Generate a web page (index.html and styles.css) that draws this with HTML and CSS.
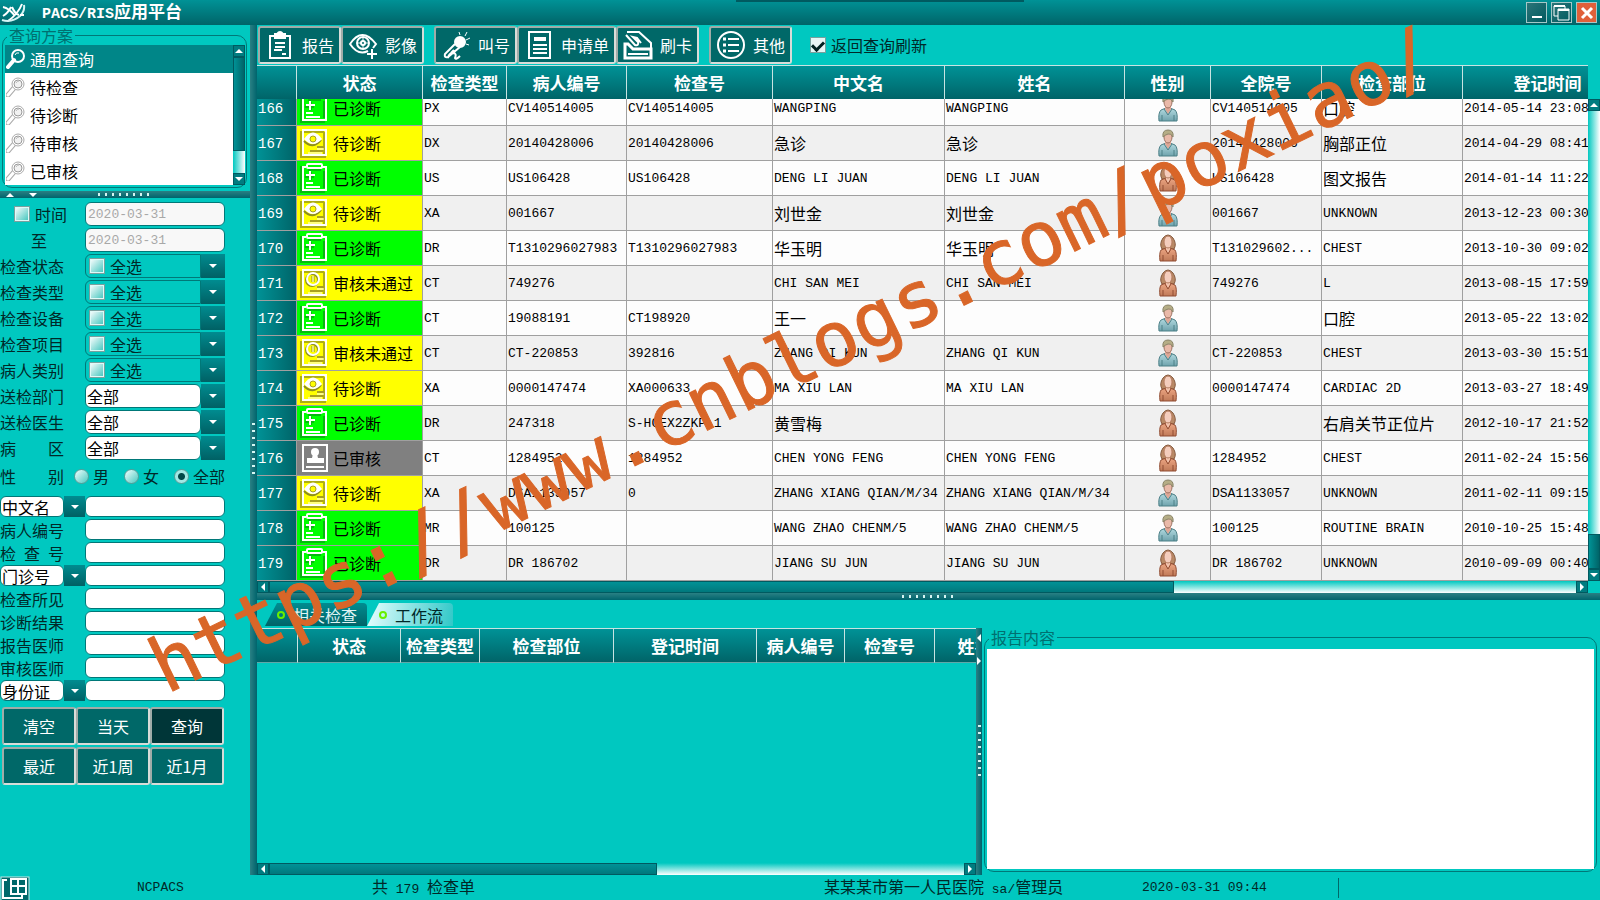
FILE: index.html
```html
<!DOCTYPE html>
<html lang="zh-CN">
<head>
  <meta charset="UTF-8">
  <meta name="viewport" content="width=device-width, initial-scale=1.0">
  <title>PACS/RIS应用平台</title>
  <link rel="stylesheet" href="styles.css">
</head>
<body>
  <!-- Shared icons -->
  <svg class="sprite" aria-hidden="true">
    <defs>
      <linearGradient id="shirt-m" x1="0" y1="0" x2="0" y2="1"><stop offset="0" stop-color="#b5dce2"/><stop offset="1" stop-color="#6fa3ad"/></linearGradient>
      <linearGradient id="shirt-f" x1="0" y1="0" x2="0" y2="1"><stop offset="0" stop-color="#eda683"/><stop offset="1" stop-color="#c07a58"/></linearGradient>
    </defs>
    <symbol id="done" viewBox="0 0 28 30">
      <path d="M6 4H1v25h24M24 8v17M8 7h13M11 9v8M5 14h9" fill="none" stroke="#0a8a1a" stroke-width="2" opacity=".6"/>
      <g fill="none" stroke="#fff" stroke-width="2"><path d="M6 4H3v23h23V4h-4"/><rect x="7" y="1" width="15" height="4" rx="1"/><path d="M6 12h9M10 8v9M6 20h7M6 24h14"/></g>
    </symbol>
    <symbol id="wait" viewBox="0 0 28 30">
      <path d="M1 3v26h25M4 4h20M24 4v22" fill="none" stroke="#8c8c20" stroke-width="2" opacity=".7"/>
      <rect x="3" y="2" width="23" height="25" fill="none" stroke="#fff" stroke-width="2"/>
      <path d="M4 13q9 9 17-1" fill="none" stroke="#8c8c20" stroke-width="2"/>
      <path d="M4 11q9-13 18 0q-9 10-18 0z" fill="#fff"/>
      <circle cx="13" cy="11" r="3" fill="#ffff00" stroke="#a8a020"/>
      <path d="M17 19h7M10 23h13" stroke="#a8a020" stroke-width="2"/><path d="M17 21h7M8 25h14" stroke="#fff"/>
    </symbol>
    <symbol id="reject" viewBox="0 0 28 30">
      <path d="M1 3v26h25M4 4h20M24 4v22" fill="none" stroke="#8c8c20" stroke-width="2" opacity=".7"/>
      <rect x="3" y="2" width="23" height="25" fill="none" stroke="#fff" stroke-width="2"/>
      <circle cx="12" cy="12" r="6" fill="none" stroke="#8c8c20" stroke-width="2"/>
      <circle cx="13" cy="11" r="6" fill="none" stroke="#fff" stroke-width="2"/>
      <path d="M12 8v6M14 8v6" stroke="#8c8c20"/><path d="M13 8v6" stroke="#fff"/>
      <path d="M17 19h7M10 23h13" stroke="#a8a020" stroke-width="2"/><path d="M17 21h7M8 25h14" stroke="#fff"/>
    </symbol>
    <symbol id="audit" viewBox="0 0 28 30">
      <rect x="3" y="2" width="24" height="26" fill="none" stroke="#fff" stroke-width="2"/>
      <circle cx="15" cy="9" r="4" fill="#fff"/><path d="M13 11h4l1 4h6v5H7v-5h5zM6 23h18v2H6z" fill="#fff"/>
    </symbol>
    <symbol id="male" viewBox="0 0 20 28">
      <path d="M1 27q-1-8 2-11l5-2h4l5 2q3 3 2 11z" fill="url(#shirt-m)" stroke="#4d8087"/>
      <path d="M7 12h6v3l-3 5-3-5z" fill="#dfa796"/><path d="M6 15l4 6 4-6M4 21v6M16 21v6" fill="none" stroke="#4d8087"/>
      <ellipse cx="10" cy="8" rx="4" ry="6" fill="#e9b9a8" stroke="#9c7162"/>
      <path d="M5 8q-1-7 5-7t5 7q-2-4-5-3t-5 3z" fill="#b5ad86" stroke="#8a8468"/>
    </symbol>
    <symbol id="female" viewBox="0 0 20 28">
      <path d="M4 15Q1 10 5 4q5-6 10 0 4 6 1 11z" fill="#b98a66" stroke="#84583c"/>
      <path d="M2 27q-1-8 1-11l5-2h4l5 2q2 3 1 11z" fill="url(#shirt-f)" stroke="#914d33"/>
      <path d="M8 12h4v3l-2 4-2-4z" fill="#f1c3ae"/><path d="M7 15l3 5 3-5M5 21v6M15 21v6" fill="none" stroke="#914d33"/>
      <ellipse cx="10" cy="8" rx="4" ry="6" fill="#f4cdbd" stroke="#b57c60"/>
    </symbol>
    <symbol id="search" viewBox="0 0 20 20">
      <path d="M8 11l-6 7" stroke="currentColor" stroke-width="4" stroke-linecap="round"/>
      <circle cx="12" cy="7" r="6" fill="none" stroke="currentColor" stroke-width="2"/>
      <path d="M9 6q1-3 4-2" fill="none" stroke="currentColor"/>
    </symbol>
    <symbol id="search-grey" viewBox="0 0 20 20">
      <path d="M8 11l-6 7" stroke="#aaa" stroke-width="5" stroke-linecap="round"/><path d="M8 11l-6 7" stroke="#fff" stroke-width="3" stroke-linecap="round"/>
      <circle cx="12" cy="7" r="6" fill="#fff" stroke="#aaa"/><circle cx="12" cy="7" r="4" fill="#f2f2f2" stroke="#999"/>
      <path d="M10 6q1-2 3-2" fill="none" stroke="#bbb"/>
    </symbol>
  </svg>

  <header class="titlebar">
    <svg class="logo" width="26" height="22" viewBox="0 0 26 22" fill="none" stroke="#fff"><path d="M3 5q6 1 12 9M11 5q-3 6-8 9M12 5q3 7 7 8M22 2q-4 10-14 17" stroke-width="2"/><path d="M2 18q10 3 18-4 5-5 4-11" stroke="#d5f5f5" stroke-width="2"/><path d="M20 13h4" stroke-width="2"/></svg>
    <h1><span class="latin">PACS/RIS</span>应用平台</h1>
    <div class="win-btns">
      <button aria-label="最小化"><svg width="20" height="20"><path d="M5 14h10" stroke="#fff" stroke-width="2"/></svg></button>
      <button aria-label="还原"><svg width="20" height="20" fill="none" stroke="#fff"><path d="M6 13H2V3h11v3M6 6h11v11H6z" stroke-width="1"/><path d="M2 3h11M6 7h11" stroke-width="2"/></svg></button>
      <button class="close" aria-label="关闭"><svg width="20" height="20"><path d="M5 5l10 10M15 5L5 15" stroke="#fff" stroke-width="3"/></svg></button>
    </div>
  </header>

  <div class="work">
    <aside class="sidebar">
      <fieldset class="group schemes">
        <legend>查询方案</legend>
        <div class="scheme-box">
          <ul>
            <li class="active"><svg><use href="#search"/></svg>通用查询</li>
            <li><svg><use href="#search-grey"/></svg>待检查</li>
            <li><svg><use href="#search-grey"/></svg>待诊断</li>
            <li><svg><use href="#search-grey"/></svg>待审核</li>
            <li><svg><use href="#search-grey"/></svg>已审核</li>
          </ul>
          <div class="vscroll"><i class="sb up"></i><i class="thumb"></i><i class="track"></i><i class="sb down"></i></div>
        </div>
      </fieldset>
      <div class="split-h side-split"><i class="tri up"></i><i class="tri down"></i><i class="dots"></i></div>

      <form class="query">
        <div class="row"><label class="time"><input type="checkbox">时间</label><input type="text" value="2020-03-31" aria-label="开始日期" disabled></div>
        <div class="row"><label class="to" for="date-end">至</label><input type="text" id="date-end" value="2020-03-31" disabled></div>
        <div class="row"><span class="name">检查状态</span><div class="combo"><label><input type="checkbox">全选</label><button type="button" class="arrow" aria-label="检查状态"></button></div></div>
        <div class="row"><span class="name">检查类型</span><div class="combo"><label><input type="checkbox">全选</label><button type="button" class="arrow" aria-label="检查类型"></button></div></div>
        <div class="row"><span class="name">检查设备</span><div class="combo"><label><input type="checkbox">全选</label><button type="button" class="arrow" aria-label="检查设备"></button></div></div>
        <div class="row"><span class="name">检查项目</span><div class="combo"><label><input type="checkbox">全选</label><button type="button" class="arrow" aria-label="检查项目"></button></div></div>
        <div class="row"><span class="name">病人类别</span><div class="combo"><label><input type="checkbox">全选</label><button type="button" class="arrow" aria-label="病人类别"></button></div></div>
        <div class="row"><label class="name" for="dept">送检部门</label><div class="combo"><select id="dept"><option>全部</option></select><i class="arrow"></i></div></div>
        <div class="row"><label class="name" for="doctor">送检医生</label><div class="combo"><select id="doctor"><option>全部</option></select><i class="arrow"></i></div></div>
        <div class="row"><label class="name" for="ward">病 区</label><div class="combo"><select id="ward"><option>全部</option></select><i class="arrow"></i></div></div>
        <div class="sex">
          <span class="name">性 别</span>
          <label><input type="radio" name="sex">男</label>
          <label><input type="radio" name="sex">女</label>
          <label><input type="radio" name="sex" checked>全部</label>
        </div>
        <div class="row small"><div class="combo"><select aria-label="姓名字段"><option>中文名</option></select><i class="arrow"></i></div><input type="text" aria-label="中文名"></div>
        <div class="row small"><label class="name" for="pid">病人编号</label><input type="text" id="pid"></div>
        <div class="row small"><label class="name" for="eid">检 查 号</label><input type="text" id="eid"></div>
        <div class="row small"><div class="combo"><select aria-label="号码字段"><option>门诊号</option></select><i class="arrow"></i></div><input type="text" aria-label="门诊号"></div>
        <div class="row small"><label class="name" for="finding">检查所见</label><input type="text" id="finding"></div>
        <div class="row small"><label class="name" for="result">诊断结果</label><input type="text" id="result"></div>
        <div class="row small"><label class="name" for="reporter">报告医师</label><input type="text" id="reporter"></div>
        <div class="row small"><label class="name" for="auditor">审核医师</label><input type="text" id="auditor"></div>
        <div class="row small"><div class="combo"><select aria-label="证件字段"><option>身份证</option></select><i class="arrow"></i></div><input type="text" aria-label="身份证"></div>
        <div class="actions">
          <button type="reset" class="btn">清空</button>
          <button type="button" class="btn">当天</button>
          <button type="submit" class="btn dark">查询</button>
          <button type="button" class="btn">最近</button>
          <button type="button" class="btn">近1周</button>
          <button type="button" class="btn">近1月</button>
        </div>
      </form>
    </aside>

    <div class="split-v"><i class="dots"></i></div>

    <main class="main">
      <div class="toolbar">
        <button class="btn"><svg viewBox="0 0 30 30" fill="none" stroke="#fff" stroke-width="2"><path d="M9 6H5v22h20V6h-4"/><path d="M10 4h2q3-4 6 0h2v4H10z" fill="#fff"/><path d="M10 13h10M10 17h10M9 20h8M17 24h4"/></svg>报告</button>
        <button class="btn"><svg viewBox="0 0 30 30" fill="none" stroke="#fff" stroke-width="2"><path d="M20 21q-10 5-18-7Q14-4 28 14l-3 4"/><circle cx="15" cy="13" r="6"/><circle cx="15" cy="13" r="2"/><path d="M15 7v4M15 15v4M9 13h4M17 13h4" stroke-width="1"/><path d="M24 19v10M19 24h10"/></svg>影像</button>
        <button class="btn gap"><svg viewBox="0 0 30 30" fill="none" stroke="#fff" stroke-width="2"><circle cx="19" cy="12" r="5" fill="#fff"/><path d="M14 14L4 24q-1 4 3 3l12-10M10 23l3-3M7 28q1-5 5-5t2 5q1 2 5-2"/><path d="M19 5l-1-3M24 6l2-4M25 10l4-2M25 14l3 1" stroke-width="1"/></svg>叫号</button>
        <button class="btn"><svg viewBox="0 0 30 30" fill="none" stroke="#fff" stroke-width="2"><rect x="5" y="2" width="21" height="26"/><path d="M10 9h12" stroke-width="4"/><path d="M9 15h14M9 19h14M9 23h14"/></svg>申请单</button>
        <button class="btn"><svg viewBox="0 0 30 30" fill="none" stroke="#fff" stroke-width="2"><path d="M2 14h3l5 5h18v9H2z" stroke-width="3"/><path d="M4 2h12l12 11v6M3 5l9 10q4 1 3-3l-5-5 4 1 4 5M5 24h20"/></svg>刷卡</button>
        <button class="btn gap"><svg viewBox="0 0 30 30" fill="none" stroke="#fff" stroke-width="2"><circle cx="15" cy="15" r="13"/><path d="M12 9h11M12 15h11M12 21h11"/><path d="M7 9h3M7 15h3M7 21h3" stroke-width="3"/></svg>其他</button>
        <label class="refresh"><input type="checkbox" checked>返回查询刷新</label>
      </div>

      <section class="exams">
        <div class="exam-clip">
          <table class="exam-table head">
            <colgroup><col class="w-no"><col class="w-state"><col class="w-type"><col class="w-pid"><col class="w-eid"><col class="w-cname"><col class="w-name"><col class="w-sex"><col class="w-hid"><col class="w-part"><col class="w-date"></colgroup>
            <thead>
              <tr><th></th><th>状态</th><th>检查类型</th><th>病人编号</th><th>检查号</th><th>中文名</th><th>姓名</th><th>性别</th><th>全院号</th><th>检查部位</th><th>登记时间</th></tr>
            </thead>
          </table>
        </div>
        <div class="exam-view">
          <div class="exam-clip">
            <table class="exam-table rows">
              <colgroup><col class="w-no"><col class="w-state"><col class="w-type"><col class="w-pid"><col class="w-eid"><col class="w-cname"><col class="w-name"><col class="w-sex"><col class="w-hid"><col class="w-part"><col class="w-date"></colgroup>
              <tbody>
                <tr><th>166</th><td class="state done"><svg><use href="#done"/></svg>已诊断</td><td>PX</td><td>CV140514005</td><td>CV140514005</td><td>WANGPING</td><td>WANGPING</td><td class="person"><svg><use href="#male"/></svg></td><td>CV140514005</td><td class="cn">口腔</td><td>2014-05-14 23:08</td></tr>
                <tr><th>167</th><td class="state wait"><svg><use href="#wait"/></svg>待诊断</td><td>DX</td><td>20140428006</td><td>20140428006</td><td class="cn">急诊</td><td class="cn">急诊</td><td class="person"><svg><use href="#male"/></svg></td><td>20140428006</td><td class="cn">胸部正位</td><td>2014-04-29 08:41</td></tr>
                <tr><th>168</th><td class="state done"><svg><use href="#done"/></svg>已诊断</td><td>US</td><td>US106428</td><td>US106428</td><td>DENG LI JUAN</td><td>DENG LI JUAN</td><td class="person"><svg><use href="#female"/></svg></td><td>US106428</td><td class="cn">图文报告</td><td>2014-01-14 11:22</td></tr>
                <tr><th>169</th><td class="state wait"><svg><use href="#wait"/></svg>待诊断</td><td>XA</td><td>001667</td><td></td><td class="cn">刘世金</td><td class="cn">刘世金</td><td class="person"><svg><use href="#male"/></svg></td><td>001667</td><td>UNKNOWN</td><td>2013-12-23 00:30</td></tr>
                <tr><th>170</th><td class="state done"><svg><use href="#done"/></svg>已诊断</td><td>DR</td><td>T1310296027983</td><td>T1310296027983</td><td class="cn">华玉明</td><td class="cn">华玉明</td><td class="person"><svg><use href="#female"/></svg></td><td>T131029602...</td><td>CHEST</td><td>2013-10-30 09:02</td></tr>
                <tr><th>171</th><td class="state wait"><svg><use href="#reject"/></svg>审核未通过</td><td>CT</td><td>749276</td><td></td><td>CHI SAN MEI</td><td>CHI SAN MEI</td><td class="person"><svg><use href="#female"/></svg></td><td>749276</td><td>L</td><td>2013-08-15 17:59</td></tr>
                <tr><th>172</th><td class="state done"><svg><use href="#done"/></svg>已诊断</td><td>CT</td><td>19088191</td><td>CT198920</td><td class="cn">王一</td><td></td><td class="person"><svg><use href="#male"/></svg></td><td></td><td class="cn">口腔</td><td>2013-05-22 13:02</td></tr>
                <tr><th>173</th><td class="state wait"><svg><use href="#reject"/></svg>审核未通过</td><td>CT</td><td>CT-220853</td><td>392816</td><td>ZHANG QI KUN</td><td>ZHANG QI KUN</td><td class="person"><svg><use href="#male"/></svg></td><td>CT-220853</td><td>CHEST</td><td>2013-03-30 15:51</td></tr>
                <tr><th>174</th><td class="state wait"><svg><use href="#wait"/></svg>待诊断</td><td>XA</td><td>0000147474</td><td>XA000633</td><td>MA XIU LAN</td><td>MA XIU LAN</td><td class="person"><svg><use href="#female"/></svg></td><td>0000147474</td><td>CARDIAC 2D</td><td>2013-03-27 18:49</td></tr>
                <tr><th>175</th><td class="state done"><svg><use href="#done"/></svg>已诊断</td><td>DR</td><td>247318</td><td>S-HCEX2ZKP 1</td><td class="cn">黄雪梅</td><td></td><td class="person"><svg><use href="#female"/></svg></td><td></td><td class="cn">右肩关节正位片</td><td>2012-10-17 21:52</td></tr>
                <tr><th>176</th><td class="state audit"><svg><use href="#audit"/></svg>已审核</td><td>CT</td><td>1284952</td><td>1284952</td><td>CHEN YONG FENG</td><td>CHEN YONG FENG</td><td class="person"><svg><use href="#female"/></svg></td><td>1284952</td><td>CHEST</td><td>2011-02-24 15:56</td></tr>
                <tr><th>177</th><td class="state wait"><svg><use href="#wait"/></svg>待诊断</td><td>XA</td><td>DSA1133057</td><td>0</td><td>ZHANG XIANG QIAN/M/34</td><td>ZHANG XIANG QIAN/M/34</td><td class="person"><svg><use href="#male"/></svg></td><td>DSA1133057</td><td>UNKNOWN</td><td>2011-02-11 09:15</td></tr>
                <tr><th>178</th><td class="state done"><svg><use href="#done"/></svg>已诊断</td><td>MR</td><td>100125</td><td></td><td>WANG ZHAO CHENM/5</td><td>WANG ZHAO CHENM/5</td><td class="person"><svg><use href="#male"/></svg></td><td>100125</td><td>ROUTINE BRAIN</td><td>2010-10-25 15:48</td></tr>
                <tr><th>179</th><td class="state done"><svg><use href="#done"/></svg>已诊断</td><td>DR</td><td>DR 186702</td><td></td><td>JIANG SU JUN</td><td>JIANG SU JUN</td><td class="person"><svg><use href="#female"/></svg></td><td>DR 186702</td><td>UNKNOWN</td><td>2010-09-09 00:40</td></tr>
              </tbody>
            </table>
          </div>
          <div class="vscroll"><i class="sb up"></i><i class="track"></i><i class="thumb"></i><i class="sb down"></i></div>
        </div>
        <div class="hscroll"><i class="sb left"></i><i class="thumb"></i><i class="track"></i><i class="sb right"></i></div>
      </section>

      <div class="split-h"><i class="dots"></i></div>

      <section class="lower">
        <div class="related">
          <div class="tabs">
            <button class="tab">相关检查</button>
            <button class="tab active">工作流</button>
          </div>
          <div class="related-clip">
            <table class="related-table">
              <colgroup><col class="r-no"><col class="r-state"><col class="r-type"><col class="r-part"><col class="r-date"><col class="r-pid"><col class="r-eid"><col class="r-name"></colgroup>
              <thead>
                <tr><th></th><th>状态</th><th>检查类型</th><th>检查部位</th><th>登记时间</th><th>病人编号</th><th>检查号</th><th>姓名</th></tr>
              </thead>
            </table>
          </div>
          <div class="hscroll"><i class="sb left"></i><i class="thumb"></i><i class="track"></i><i class="sb right"></i></div>
        </div>
        <div class="split-v lower-split"><i class="tri left"></i><i class="tri right"></i><i class="dots"></i></div>
        <fieldset class="group report">
          <legend>报告内容</legend>
          <textarea aria-label="报告内容"></textarea>
        </fieldset>
      </section>
    </main>
  </div>

  <footer class="statusbar">
    <svg width="30" height="24" viewBox="0 0 30 24" fill="none" stroke="#fff" stroke-width="2"><rect x="1" y="1" width="28" height="24" fill="#00686a" stroke="#c5e8e6" stroke-width="1"/><path d="M7 4H3v18h19v-3"/><rect x="11" y="3" width="15" height="15"/><path d="M18 3v15M11 10h15"/></svg>
    <span class="product latin">NCPACS</span>
    <span class="count">共<span class="latin"> 179 </span>检查单</span>
    <span class="user">某某某市第一人民医院<span class="latin"> sa/</span>管理员</span>
    <span class="clock latin">2020-03-31 09:44</span>
  </footer>

  <div class="watermark">https://www.cnblogs.com/poxiao/</div>
</body>
</html>
```
FILE: styles.css
```css
:root {
  --bg: #00c8c0;
  --bar-light: #009296;
  --bar-dark: #006468;
  --btn: #006868;
  --line: #007878;
  --grid: #a0a0a0;
  --cn: "Noto Sans CJK SC", sans-serif;
  --latin: "Liberation Mono", "Noto Sans CJK SC", monospace;
}

*,
*::before {
  box-sizing: border-box;
}

body {
  margin: 0;
  height: 100vh;
  display: flex;
  flex-direction: column;
  position: relative;
  overflow: hidden;
  background: var(--bg);
  color: #002828;
  font-family: var(--cn);
  font-size: 16px;
  line-height: 20px;
}

button,
input,
select,
textarea {
  font: inherit;
  margin: 0;
  padding: 0;
}
.latin {
  font-family: var(--latin);
  font-size: 13px;
}
.sprite {
  position: absolute;
  width: 0;
  height: 0;
}

/* Title bar */
.titlebar {
  flex: none;
  height: 25px;
  display: flex;
  align-items: center;
  background: linear-gradient(var(--bar-light), var(--bar-dark));
  color: #fff;
}
.titlebar h1 {
  flex: 1;
  margin: 0 0 0 16px;
  font-size: 17px;
}
.titlebar .latin {
  font-size: 15px;
}
.titlebar::after {
  content: "";
  position: absolute;
  left: 46%;
  top: 0;
  width: 18%;
  height: 2px;
  background: #005a60;
}
.win-btns {
  display: flex;
  gap: 4px;
  padding-right: 3px;
}
.win-btns button {
  width: 21px;
  height: 21px;
  border: 1px solid #a5c8c8;
  background: linear-gradient(135deg, #2c7578, #005a60);
}
.win-btns svg {
  display: block;
}
.win-btns .close {
  background: #e0603a;
}

.work {
  flex: 1;
  min-height: 0;
  display: flex;
}

/* Groups */
.group {
  min-width: 0;
  margin: 0 3px 3px 2px;
  padding: 0 1px 2px 2px;
  border: 1px solid var(--line);
  border-radius: 10px;
}
.group legend {
  margin-left: 2px;
  padding: 0 2px;
  color: #007070;
}

/* Sidebar */
.sidebar {
  flex: none;
  width: 250px;
}
.scheme-box {
  display: flex;
}
.scheme-box ul {
  flex: 1;
  margin: 0;
  padding: 0;
  list-style: none;
  background: #fff;
  color: #000;
}
.scheme-box li {
  display: flex;
  align-items: center;
  gap: 4px;
  height: 28px;
  padding-left: 1px;
}
.scheme-box li svg {
  width: 20px;
  height: 20px;
}
.scheme-box .active {
  background: #008688;
  color: #fff;
}

/* Scroll bars */
.vscroll,
.hscroll {
  display: flex;
  flex: none;
}
.vscroll {
  flex-direction: column;
  width: 12px;
}
.hscroll {
  height: 12px;
}
.hscroll .track {
  flex: 1;
  background: linear-gradient(var(--bg), #fff);
}
.vscroll .track {
  flex: 1;
  background: linear-gradient(90deg, var(--bg), #fff);
}
.thumb {
  border: 1px solid #005a60;
  background: linear-gradient(#009296, #00787c);
}
.vscroll .thumb {
  height: 35px;
  background: linear-gradient(90deg, #009296, #006468);
}
.scheme-box .vscroll .thumb {
  flex: none;
  height: 94px;
}
.sb {
  flex: none;
  width: 12px;
  height: 12px;
  display: flex;
  align-items: center;
  justify-content: center;
  border: 1px solid #005a60;
  background: #007c80;
}
.sb::before {
  content: "";
  border: 4px solid transparent;
}
.sb.up::before,
.tri.up {
  border-top-width: 0;
  border-bottom-color: #fff;
}
.sb.down::before,
.tri.down {
  border-bottom-width: 0;
  border-top-color: #fff;
}
.sb.left::before,
.tri.left {
  border-left-width: 0;
  border-right-color: #fff;
}
.sb.right::before,
.tri.right {
  border-right-width: 0;
  border-left-color: #fff;
}

/* Splitters */
.split-h {
  flex: none;
  height: 7px;
  display: flex;
  align-items: center;
  justify-content: center;
  background: linear-gradient(#2a8084, #00646c);
}
.split-v {
  flex: none;
  width: 7px;
  display: flex;
  flex-direction: column;
  align-items: center;
  justify-content: center;
  background: linear-gradient(90deg, #2a8084, #00646c);
}
.dots {
  width: 54px;
  height: 3px;
  background: repeating-linear-gradient(90deg, #d5f5f2 0 2px, transparent 2px 7px);
}
.split-v .dots {
  width: 3px;
  height: 54px;
  background: repeating-linear-gradient(#d5f5f2 0 2px, transparent 2px 7px);
}
.tri {
  border: 4px solid transparent;
}
.side-split {
  justify-content: flex-start;
  gap: 15px;
  padding-left: 6px;
}
.side-split .dots {
  margin-left: 46px;
}

/* Query form */
.query {
  width: 225px;
  padding-top: 4px;
}
.row {
  display: grid;
  grid-template-columns: 85px 140px;
  align-items: center;
  height: 24px;
  margin-bottom: 2px;
}
.name {
  width: 64px;
  text-align-last: justify;
  white-space: nowrap;
}
.time {
  display: flex;
  align-items: center;
  gap: 5px;
  padding-left: 14px;
}
.to {
  padding-left: 31px;
}
input[type="text"] {
  width: 100%;
  height: 100%;
  padding: 0 2px;
  border: 1px solid var(--line);
  border-radius: 6px;
  background: #fff;
  font-family: var(--latin);
  font-size: 13px;
}
input[type="text"]:disabled {
  background: #f8f8f8;
  color: #a8a8a8;
}
input[type="checkbox"] {
  appearance: none;
  flex: none;
  width: 16px;
  height: 16px;
  border: 1px solid #7aa09e;
  background: linear-gradient(135deg, #fff, #3cc4bc);
  box-shadow: inset 0 0 0 1px #e0faf8;
}
.combo {
  display: flex;
  height: 100%;
  min-width: 0;
}
.combo label,
.combo select {
  flex: 1;
  min-width: 0;
  display: flex;
  align-items: center;
  gap: 5px;
  border: 1px solid var(--line);
  border-radius: 6px;
}
.combo label {
  padding-left: 3px;
  border-radius: 6px 0 0 6px;
}
.combo select {
  appearance: none;
  padding: 0 1px;
  background: #fff;
  color: #000;
  line-height: 18px;
}
.arrow {
  flex: none;
  width: 24px;
  display: flex;
  align-items: center;
  justify-content: center;
  border: 0;
  background: linear-gradient(#008c90, #006064);
}
.arrow::before {
  content: "";
  border: 4px solid transparent;
  border-bottom-width: 0;
  border-top-color: #fff;
}
.small {
  height: 21px;
}
.small .arrow {
  width: 21px;
}
.sex {
  display: flex;
  align-items: center;
  height: 28px;
  margin: 0 -2px 6px 0;
}
.sex label {
  display: flex;
  align-items: center;
  gap: 4px;
  margin-right: 15px;
  white-space: nowrap;
}
.sex .name {
  margin-right: 10px;
}
.sex label:last-child {
  margin-right: 0;
}
.sex input {
  appearance: none;
  width: 15px;
  height: 15px;
  border: 1px solid #5a9c98;
  border-radius: 50%;
  background: linear-gradient(135deg, #f0fffe, #4cc8c0);
}
.sex input:checked {
  background: radial-gradient(#004848 0 3px, #a0e8e4 4px);
}
.btn {
  display: flex;
  align-items: center;
  justify-content: center;
  height: 38px;
  border: 2px solid #d8dcd8;
  border-top-color: #a0aca8;
  border-left-color: #a0aca8;
  border-radius: 3px;
  background: var(--btn);
  color: #fff;
  white-space: nowrap;
}
.btn.dark {
  background: #003638;
}
.actions {
  display: grid;
  grid-template-columns: repeat(3, 1fr);
  gap: 2px 0;
  padding: 4px 1px 0 2px;
}

/* Main area */
.main {
  flex: 1;
  min-width: 0;
  display: flex;
  flex-direction: column;
}
.toolbar {
  flex: none;
  display: flex;
  align-items: center;
  height: 40px;
  padding-left: 1px;
}
.toolbar .btn {
  gap: 7px;
  min-width: 83px;
  padding: 0 5px;
}
.toolbar .btn svg {
  width: 30px;
  height: 30px;
}
.toolbar .gap {
  margin-left: 10px;
}
.refresh {
  display: flex;
  align-items: center;
  gap: 5px;
  margin-left: 18px;
}
.refresh input[type="checkbox"] {
  display: flex;
  align-items: center;
  justify-content: center;
  background: #e8f4f4;
}
.refresh input:checked::before {
  content: "";
  width: 12px;
  height: 8px;
  border: solid #002020;
  border-width: 0 0 3px 3px;
  transform: rotate(-45deg);
}

/* Tables */
table {
  table-layout: fixed;
  border-spacing: 0;
}
thead th {
  height: 34px;
  padding: 0;
  border-top: 1px solid #c8e4e2;
  border-right: 1px solid #c8e4e2;
  background: linear-gradient(var(--bar-light), var(--bar-dark));
  color: #fff;
  font-size: 17px;
  white-space: nowrap;
}
.exams {
  flex: none;
}
.exams > .exam-clip,
.exams > .hscroll {
  margin-right: 12px;
}
.exam-clip {
  flex: 1;
  min-width: 0;
  overflow: hidden;
}
.exam-view {
  display: flex;
}
.exam-table {
  width: 1376px;
}
.w-no { width: 40px; }
.w-state { width: 126px; }
.w-type { width: 84px; }
.w-pid { width: 120px; }
.w-eid { width: 146px; }
.w-cname { width: 172px; }
.w-name { width: 180px; }
.w-sex { width: 86px; }
.w-hid { width: 111px; }
.w-part { width: 141px; }
.w-date { width: 170px; }

/* the list is scrolled part way into its first row */
.rows {
  margin-top: -8px;
  color: #000;
}
.rows th,
.rows td {
  height: 35px;
  padding: 2px 0 0 1px;
  border-right: 1px solid var(--grid);
  border-bottom: 1px solid var(--grid);
  font-family: var(--latin);
  font-size: 13px;
  text-align: left;
  white-space: nowrap;
}
.rows th {
  background: linear-gradient(90deg, var(--bar-light), var(--bar-dark));
  color: #fff;
  font-size: 14px;
  font-weight: normal;
}
.rows tr {
  background: #fdfdfd;
}
.rows tr:nth-child(even) {
  background: #f0f0f0;
}
.rows .cn,
.rows .state {
  padding-top: 0;
  font-family: var(--cn);
  font-size: 16px;
}
.rows .state {
  line-height: 30px;
}
.rows svg {
  width: 28px;
  height: 30px;
  vertical-align: top;
}
.state svg {
  margin: 0 5px 0 2px;
}
.rows .done { background: #00ff00; }
.rows .wait { background: #ffff00; }
.rows .audit { background: #808080; }
.rows .person {
  padding: 0;
  text-align: center;
}
.person svg {
  height: 28px;
}
.exams .hscroll .thumb {
  width: 68%;
}

/* Lower area */
.lower {
  flex: 1;
  min-height: 0;
  display: grid;
  grid-template-columns: minmax(0, 719fr) 6px minmax(0, 618fr);
}
.related {
  display: flex;
  flex-direction: column;
}
.tabs {
  display: flex;
  align-items: flex-end;
  height: 28px;
  padding: 0 0 2px 8px;
}
.tab {
  display: flex;
  align-items: center;
  gap: 8px;
  height: 23px;
  padding: 0 10px 0 12px;
  border: 0;
  border-radius: 0 4px 0 0;
  background: linear-gradient(#008c90, #006468);
  clip-path: polygon(12px 0, 100% 0, 100% 100%, 0 100%);
  color: #e0f4f4;
}
.tab::before {
  content: "";
  width: 8px;
  height: 8px;
  border: 2px solid #68f000;
  border-radius: 50%;
}
.tab.active {
  background: linear-gradient(100deg, #e8ffff, #30c8c8);
  color: #002828;
}
.related-clip {
  flex: 1;
  overflow: hidden;
}
.related-table {
  width: 758px;
}
.related-table th {
  height: 35px;
  border-bottom: 1px solid #60a8a8;
}
.r-no { width: 41px; }
.r-state { width: 103px; }
.r-type { width: 79px; }
.r-part { width: 134px; }
.r-date { width: 143px; }
.r-pid { width: 88px; }
.r-eid { width: 90px; }
.r-name { width: 80px; }
.related .hscroll .thumb {
  width: 54%;
}
.lower-split {
  width: 6px;
  margin-top: 28px;
  justify-content: flex-start;
}
.lower-split .tri.right {
  margin-top: 15px;
}
.lower-split .tri.left {
  margin-top: 6px;
}
.lower-split .dots {
  margin-top: 60px;
}
.report {
  margin-top: 27px;
  padding: 2px;
  display: flex;
}
.report textarea {
  display: block;
  width: 100%;
  height: 100%;
  border: 0;
  resize: none;
  background: #fff;
}

/* Status bar */
.statusbar {
  flex: none;
  display: grid;
  grid-template-columns: 137px 235px 452px 318px 197px 1fr;
  align-items: center;
  height: 25px;
}
.statusbar span {
  white-space: pre;
}
.clock {
  border-right: 1px solid #006868;
}

.watermark {
  position: absolute;
  right: 50%;
  top: 40%;
  margin-right: 8px;
  color: #d96628;
  font-family: "DejaVu Sans Mono", monospace;
  font-size: 76px;
  line-height: 90px;
  white-space: nowrap;
  pointer-events: none;
  -webkit-text-stroke: 1px #d96628;
  transform: translate(50%, -50%) rotate(-26deg);
}
```
